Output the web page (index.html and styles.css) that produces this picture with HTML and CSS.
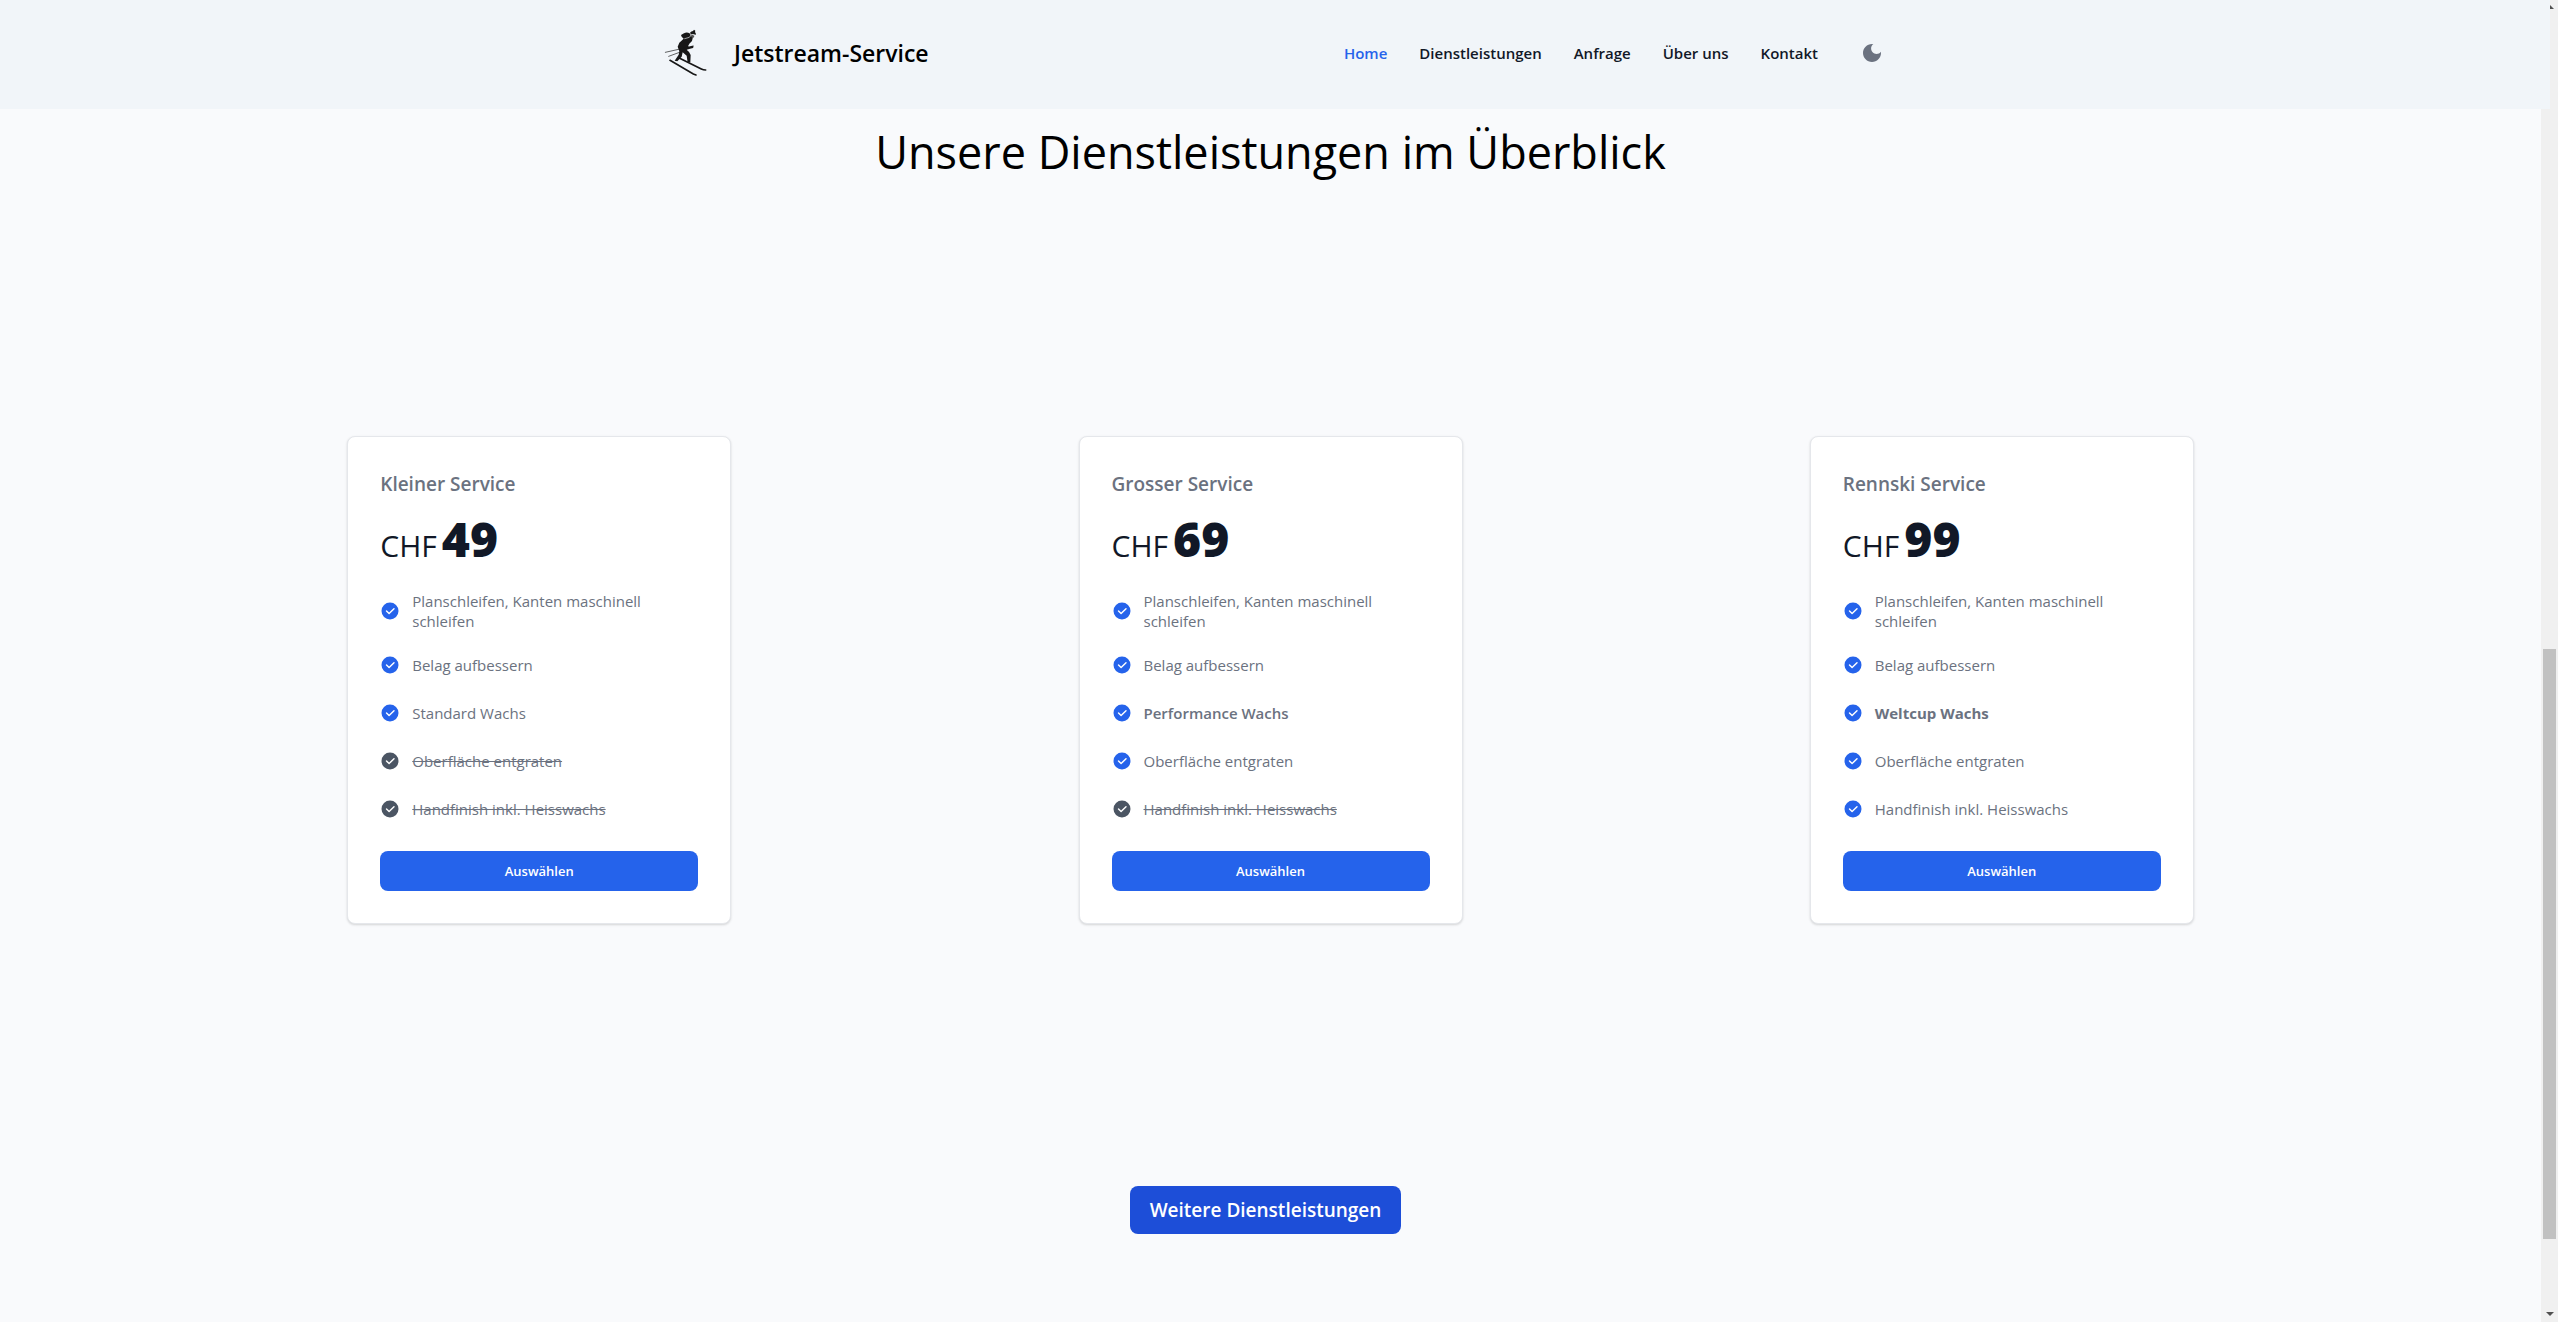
FILE: index.html
```html
<!DOCTYPE html>
<html lang="de">
<head>
<meta charset="utf-8">
<title>Jetstream-Service</title>
<meta name="viewport" content="width=device-width, initial-scale=1">
<link rel="stylesheet" href="styles.css">
</head>
<body>
<svg class="sprite" aria-hidden="true">
  <symbol id="check" viewBox="0 0 20 20">
    <path fill="currentColor" fill-rule="evenodd" d="M10 18.500a8.500 8.500 0 1 0 0-17 8.500 8.500 0 0 0 0 17zm4.500-10.300a.7.700 0 0 0-1-1L9.100 11.600 7 9.500a.7.700 0 0 0-1 1l2.600 2.600a.7.700 0 0 0 1 0z"/>
  </symbol>
</svg>

<header class="header">
  <div class="header-inner">
    <a class="brand" href="#">
      <svg class="logo" viewBox="0 0 144 150" aria-hidden="true">
        <g fill="#171717">
          <path d="M84 14q4-5 9-5l3-4 4 3-1 4q4 5 2 9l-5-2-10-1z"/>
          <path d="M85 19l6 1 6 3-1 5-5 3-6-3z" fill="#555"/>
          <path d="M66 16q8-5 17 0l3 8 6 7-2 8-8 8-4 8 4 1 9-3 4 3-2 4-9 2-10 3q11 8 12 16l-1 22-8 1-3-21-12-10-3 13-13 14-8-2 12-18 2-10-5-14 5-12 13-12-6-6-2-5z"/>
        </g>
        <g fill="none" stroke="#171717" stroke-linecap="round">
          <path stroke="#e5e7eb" stroke-width="2" d="M68 32l14-4 5-6"/>
          <path stroke-width="2" d="M94 54L10 73M74 65L20 85"/>
          <path stroke-width="5" d="M24 97l70 41 8 3M50 89l68 34q6 3 13 3"/>
        </g>
      </svg>
      <span>Jetstream-Service</span>
    </a>
    <nav class="nav">
      <a class="nav-link active" href="#">Home</a>
      <a class="nav-link" href="#">Dienstleistungen</a>
      <a class="nav-link" href="#">Anfrage</a>
      <a class="nav-link" href="#">Über uns</a>
      <a class="nav-link" href="#">Kontakt</a>
      <button class="theme" type="button" aria-label="Dunkelmodus">
        <svg viewBox="0 0 24 24" aria-hidden="true"><path fill="currentColor" d="M12 3c-4.970 0-9 4.030-9 9s4.030 9 9 9 9-4.030 9-9c0-.46-.04-.92-.1-1.360-.98 1.370-2.580 2.260-4.400 2.260-2.980 0-5.400-2.420-5.400-5.400 0-1.810.89-3.420 2.260-4.400-.44-.06-.9-.1-1.360-.1z"/></svg>
      </button>
    </nav>
  </div>
</header>

<div class="scrollbar" aria-hidden="true">
  <span class="arrow up"></span>
  <span class="track"><span class="thumb"></span></span>
  <span class="arrow down"></span>
</div>

<main class="main">
  <h1 class="title">Unsere Dienstleistungen im Überblick</h1>

  <section class="cards">
    <article class="card">
      <h2 class="card-title">Kleiner Service</h2>
      <p class="price"><span class="currency">CHF</span><span class="amount">49</span></p>
      <ul class="features">
        <li><svg class="check"><use href="#check"/></svg><span>Planschleifen, Kanten maschinell schleifen</span></li>
        <li><svg class="check"><use href="#check"/></svg><span>Belag aufbessern</span></li>
        <li><svg class="check"><use href="#check"/></svg><span>Standard Wachs</span></li>
        <li class="off"><svg class="check"><use href="#check"/></svg><span>Oberfläche entgraten</span></li>
        <li class="off"><svg class="check"><use href="#check"/></svg><span>Handfinish inkl. Heisswachs</span></li>
      </ul>
      <button class="select" type="button">Auswählen</button>
    </article>

    <article class="card">
      <h2 class="card-title">Grosser Service</h2>
      <p class="price"><span class="currency">CHF</span><span class="amount">69</span></p>
      <ul class="features">
        <li><svg class="check"><use href="#check"/></svg><span>Planschleifen, Kanten maschinell schleifen</span></li>
        <li><svg class="check"><use href="#check"/></svg><span>Belag aufbessern</span></li>
        <li><svg class="check"><use href="#check"/></svg><span class="semibold">Performance Wachs</span></li>
        <li><svg class="check"><use href="#check"/></svg><span>Oberfläche entgraten</span></li>
        <li class="off"><svg class="check"><use href="#check"/></svg><span>Handfinish inkl. Heisswachs</span></li>
      </ul>
      <button class="select" type="button">Auswählen</button>
    </article>

    <article class="card">
      <h2 class="card-title">Rennski Service</h2>
      <p class="price"><span class="currency">CHF</span><span class="amount">99</span></p>
      <ul class="features">
        <li><svg class="check"><use href="#check"/></svg><span>Planschleifen, Kanten maschinell schleifen</span></li>
        <li><svg class="check"><use href="#check"/></svg><span>Belag aufbessern</span></li>
        <li><svg class="check"><use href="#check"/></svg><span class="bold">Weltcup Wachs</span></li>
        <li><svg class="check"><use href="#check"/></svg><span>Oberfläche entgraten</span></li>
        <li><svg class="check"><use href="#check"/></svg><span>Handfinish inkl. Heisswachs</span></li>
      </ul>
      <button class="select" type="button">Auswählen</button>
    </article>
  </section>

  <div class="more-row">
    <button class="more" type="button">Weitere Dienstleistungen</button>
  </div>
</main>
</body>
</html>
```
FILE: styles.css
```css
*, *::before, *::after { box-sizing: border-box; }

html { overflow: hidden; }

body {
  margin: 0;
  min-height: 100vh;
  background: #f9fafc;
  color: #000;
  font-family: "Segoe UI", "Open Sans", "Noto Sans", sans-serif;
  font-size: 15px;
  line-height: 24px;
}

h1, h2, p, ul { margin: 0; padding: 0; }
button { border: 0; font-family: inherit; cursor: pointer; }
a { color: inherit; text-decoration: none; }

.sprite { position: absolute; width: 0; height: 0; }

/* Header */
.header {
  position: relative;
  z-index: 2;
  margin-right: 8px;
  height: 109px;
  padding-bottom: 3px;
  background: #f1f5f9;
}

.header-inner {
  display: flex;
  align-items: center;
  justify-content: space-between;
  max-width: 1248px;
  height: 100%;
  margin: 0 auto;
  padding: 0 5px 0 11px;
}

.brand {
  display: flex;
  align-items: center;
  gap: 24px;
  font-size: 23px;
  font-weight: 600;
  line-height: 32px;
}

.logo { width: 48px; height: 50px; }

.nav { display: flex; align-items: center; gap: 32px; }

.nav-link {
  color: #111827;
  font-weight: 600;
}

.nav-link.active { color: #2563eb; }

.theme {
  padding: 10px;
  background: none;
  color: #6b7280;
}

.theme svg { display: block; width: 24px; height: 24px; }

/* Window scrollbar */
.scrollbar {
  position: fixed;
  top: 0;
  right: 0;
  bottom: 0;
  z-index: 1;
  display: flex;
  flex-direction: column;
  align-items: center;
  width: 17px;
  padding: 5px 0 6px;
  background: #f0f0f0;
}

.arrow { border: 4px solid transparent; }
.arrow.up { border-top: 0; border-bottom-color: #505050; }
.arrow.down { border-bottom: 0; border-top-color: #505050; }

.track {
  display: flex;
  flex: 1;
  flex-direction: column;
  justify-content: flex-end;
  width: 13px;
  padding-bottom: 73px;
}

.thumb { height: 48%; background: #c1c1c1; }

/* Services */
.main {
  display: flex;
  flex-direction: column;
  margin-right: 17px;
}

.title {
  padding-top: 19px;
  font-size: 45px;
  font-weight: 400;
  line-height: 48px;
  text-align: center;
}

.cards {
  display: flex;
  flex-wrap: wrap;
  justify-content: space-evenly;
  margin-top: 260px;
}

.card {
  width: 384px;
  padding: 32px;
  border: 1px solid #e5e7eb;
  border-radius: 8px;
  background: #fff;
  box-shadow: 0 1px 3px rgba(0, 0, 0, 0.1), 0 1px 2px rgba(0, 0, 0, 0.06);
}

.card-title {
  margin-bottom: 16px;
  color: #6b7280;
  font-size: 19px;
  font-weight: 600;
  line-height: 30px;
}

.price {
  display: flex;
  align-items: baseline;
  gap: 5px;
  height: 48px;
  color: #111827;
  line-height: 48px;
}

.currency { font-size: 30px; font-weight: 500; }
.amount { font-size: 48px; font-weight: 800; }

.features {
  display: flex;
  flex-direction: column;
  gap: 20px;
  margin: 28px 0;
  color: #6b7280;
  line-height: 20px;
  list-style: none;
}

.features li {
  display: flex;
  align-items: center;
  gap: 12px;
  min-height: 28px;
}

.check {
  flex: none;
  width: 20px;
  height: 20px;
  color: #2563eb;
}

.off span { text-decoration: line-through; }
.off .check { color: #4b5563; }
.semibold { font-weight: 600; }
.bold { font-weight: 700; }

.select {
  display: block;
  width: 100%;
  padding: 10px 20px;
  border-radius: 8px;
  background: #2563eb;
  color: #fff;
  font-size: 13px;
  font-weight: 600;
  line-height: 20px;
}

.more-row {
  display: flex;
  justify-content: center;
  margin-top: 262px;
  padding-right: 10px;
}

.more {
  padding: 10px 20px;
  border-radius: 8px;
  background: #1d4ed8;
  color: #fff;
  font-size: 19px;
  font-weight: 600;
  line-height: 28px;
}
```
